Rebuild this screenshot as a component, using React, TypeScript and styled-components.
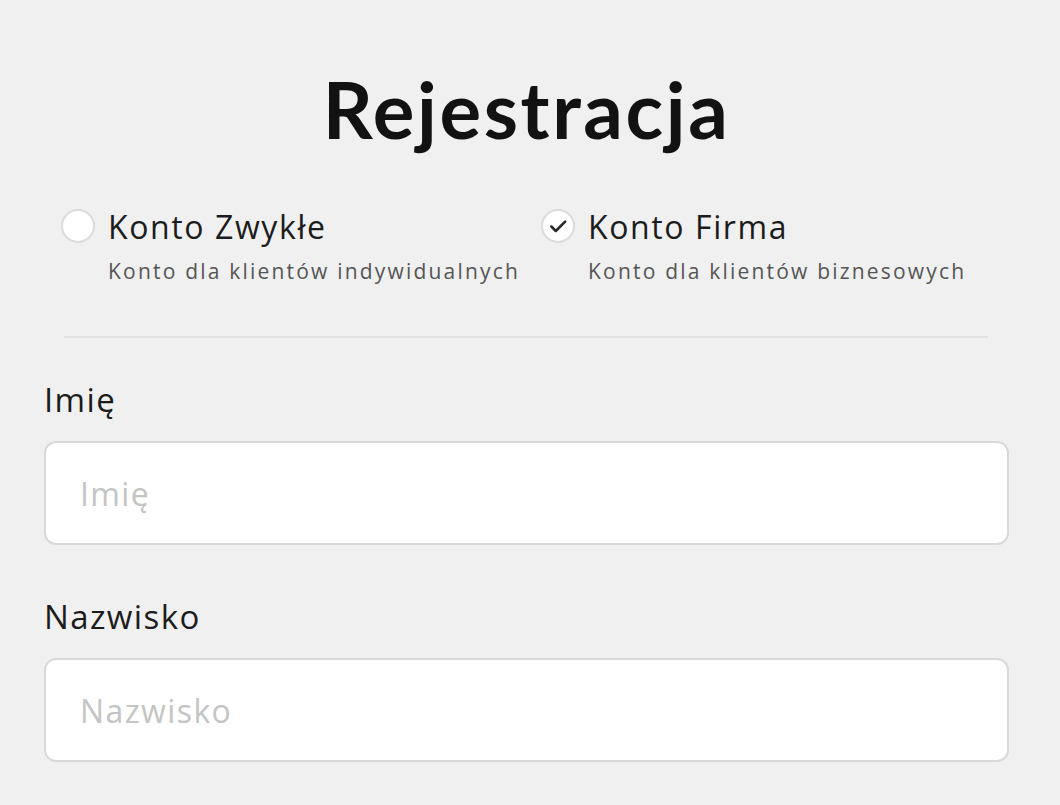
import React from 'react'
import styled, { createGlobalStyle } from 'styled-components'

const GlobalStyle = createGlobalStyle`
  html, body {
    margin: 0;
    padding: 0;
    background: #f0f0f0;
  }
  body {
    font-family: "Open Sans", "Noto Sans", sans-serif;
    color: #1a1a1a;
  }
`

const Page = styled.div`
  width: 1060px;
  height: 805px;
  overflow: hidden;
  box-sizing: border-box;
  padding: 57px 51px 0 44px;
  display: flex;
  flex-direction: column;
`

const Title = styled.h1`
  margin: 0;
  text-align: center;
  font-family: Lato, "Noto Sans", sans-serif;
  font-size: 78px;
  font-weight: 700;
  line-height: 104px;
  letter-spacing: 2.6px;
  color: #121212;
`

const Options = styled.div`
  display: grid;
  grid-template-columns: 480px 480px;
  padding: 48px 0 0 17px;
`

const Option = styled.label`
  display: grid;
  grid-template-columns: 34px 1fr;
  column-gap: 13px;
  row-gap: 13px;
  cursor: pointer;
`

const Circle = styled.span<{ $checked?: boolean }>`
  width: 34px;
  height: 34px;
  box-sizing: border-box;
  border-radius: 50%;
  border: 2px solid #dcdcdc;
  background: #fff;
  display: flex;
  align-items: center;
  justify-content: center;
  margin-top: 0px;
`

const OptionTitle = styled.span`
  font-size: 32px;
  line-height: 36px;
  letter-spacing: 1.6px;
  color: #1c1c1c;
`

const OptionDesc = styled.span`
  grid-column: 2;
  font-size: 21px;
  line-height: 26px;
  letter-spacing: 2.2px;
  color: #555;
`

const Divider = styled.hr`
  margin: 52px 21px 0 20px;
  border: none;
  height: 2px;
  background: #e3e3e3;
`

const Field = styled.div`
  display: flex;
  flex-direction: column;
  gap: 22px;
  margin-top: 43px;

  & + & {
    margin-top: 53px;
  }
`

const Label = styled.label`
  font-size: 33px;
  line-height: 38px;
  letter-spacing: 1.4px;
  color: #1c1c1c;
`

const Input = styled.input`
  height: 104px;
  box-sizing: border-box;
  border: 2px solid #d9d9d9;
  border-radius: 12px;
  background: #fff;
  padding: 0 34px;
  font-family: inherit;
  font-size: 32px;
  letter-spacing: 1.4px;
  color: #1c1c1c;
  outline: none;

  &::placeholder {
    color: #c4c4c4;
  }
`

const Check = () => (
  <svg width="22" height="22" viewBox="0 0 20 20" fill="none">
    <path d="M4 10.5l4 4L16.5 6" stroke="#2a2a2a" strokeWidth="2.4" strokeLinecap="round" strokeLinejoin="round" />
  </svg>
)

export default function App() {
  return (
    <Page>
      <GlobalStyle />
      <Title>Rejestracja</Title>
      <Options>
        <Option>
          <Circle />
          <OptionTitle>Konto Zwykłe</OptionTitle>
          <OptionDesc>Konto dla klientów indywidualnych</OptionDesc>
        </Option>
        <Option>
          <Circle $checked>
            <Check />
          </Circle>
          <OptionTitle>Konto Firma</OptionTitle>
          <OptionDesc>Konto dla klientów biznesowych</OptionDesc>
        </Option>
      </Options>
      <Divider />
      <Field>
        <Label>Imię</Label>
        <Input placeholder="Imię" />
      </Field>
      <Field>
        <Label>Nazwisko</Label>
        <Input placeholder="Nazwisko" />
      </Field>
    </Page>
  )
}
